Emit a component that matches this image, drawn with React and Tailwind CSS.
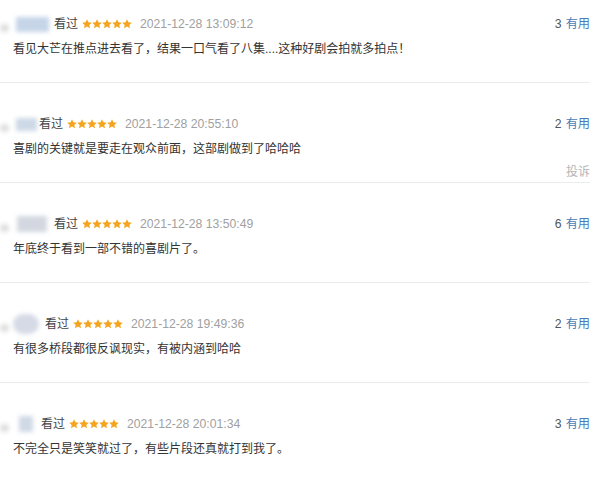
const reviews = [
  { blob: 'w-[33px] h-[15px]', blobTone: 'bg-[#c6d5e8]', ml: 'ml-[7px]', gap: 'ml-[5px]', date: '2021-12-28 13:09:12', text: '看见大芒在推点进去看了，结果一口气看了八集....这种好剧会拍就多拍点！', votes: 3 },
  { blob: 'w-[21px] h-[13px]', blobTone: 'bg-[#cdd9e6]', ml: 'ml-[7px]', gap: 'ml-[2px]', date: '2021-12-28 20:55:10', text: '喜剧的关键就是要走在观众前面，这部剧做到了哈哈哈', votes: 2, report: true },
  { blob: 'w-[30px] h-[16px]', blobTone: 'bg-[#d3d8e0]', ml: 'ml-[8px]', gap: 'ml-[7px]', date: '2021-12-28 13:50:49', text: '年底终于看到一部不错的喜剧片了。', votes: 6 },
  { blob: 'w-[26px] h-[20px] rounded-full', blobTone: 'bg-[#d5dae6]', ml: 'ml-[4px]', gap: 'ml-[6px]', date: '2021-12-28 19:49:36', text: '有很多桥段都很反讽现实，有被内涵到哈哈', votes: 2 },
  { blob: 'w-[14px] h-[16px]', blobTone: 'bg-[#d0d9e6]', ml: 'ml-[10px]', gap: 'ml-[8px]', date: '2021-12-28 20:01:34', text: '不完全只是笑笑就过了，有些片段还真就打到我了。', votes: 3 },
];

function Stars() {
  return (
    <span className="flex items-center">
      {[0, 1, 2, 3, 4].map((i) => (
        <svg key={i} width="10" height="10" viewBox="0 0 24 24" className="block">
          <path
            d="M12 0.5l3.4 7.4 8.1.9-6 5.5 1.7 8L12 18.2 4.8 22.3l1.7-8-6-5.5 8.1-.9z"
            fill="#f4a41e"
          />
        </svg>
      ))}
    </span>
  );
}

function Review({ r }) {
  return (
    <div className="h-[100px] border-b border-[#ececec] pt-[32px] pl-[13px]">
      <div className="flex h-[18px] items-center justify-between">
        <div className="flex items-center">
          <div className="-ml-[13px] flex items-center">
            <span className="mt-[8px] h-[8px] w-[9px] rounded-sm bg-[#dedede] blur-[2px]" />
            <span className={`${r.ml} ${r.blob} ${r.blobTone} blur-[2px]`} />
          </div>
          <span className={`${r.gap} text-[12px] text-[#444]`}>看过</span>
          <span className="ml-[4px]">
            <Stars />
          </span>
          <span className="ml-[8px] text-[12.2px] text-[#a0a0a0]">{r.date}</span>
        </div>
        <div className="text-[12.2px]">
          <span className="text-[#555]">{r.votes}</span>
          <span className="ml-[4px] text-[#4a7cb8]">有用</span>
        </div>
      </div>
      <div className="mt-[6px] h-[20px] text-[12px] leading-[20px] text-[#333]">{r.text}</div>
      {r.report && (
        <div className="mt-[3px] text-right text-[12px] leading-[20px] text-[#b5b5b5]">投诉</div>
      )}
    </div>
  );
}

export default function App() {
  return (
    <div
      className="h-[480px] w-[600px] overflow-hidden bg-white"
      style={{ fontFamily: '"Liberation Sans", "Noto Sans CJK SC", sans-serif' }}
    >
      <div className="-mt-[17px] pr-[10px]">
        {reviews.map((r, i) => (
          <Review key={i} r={r} />
        ))}
      </div>
    </div>
  );
}
